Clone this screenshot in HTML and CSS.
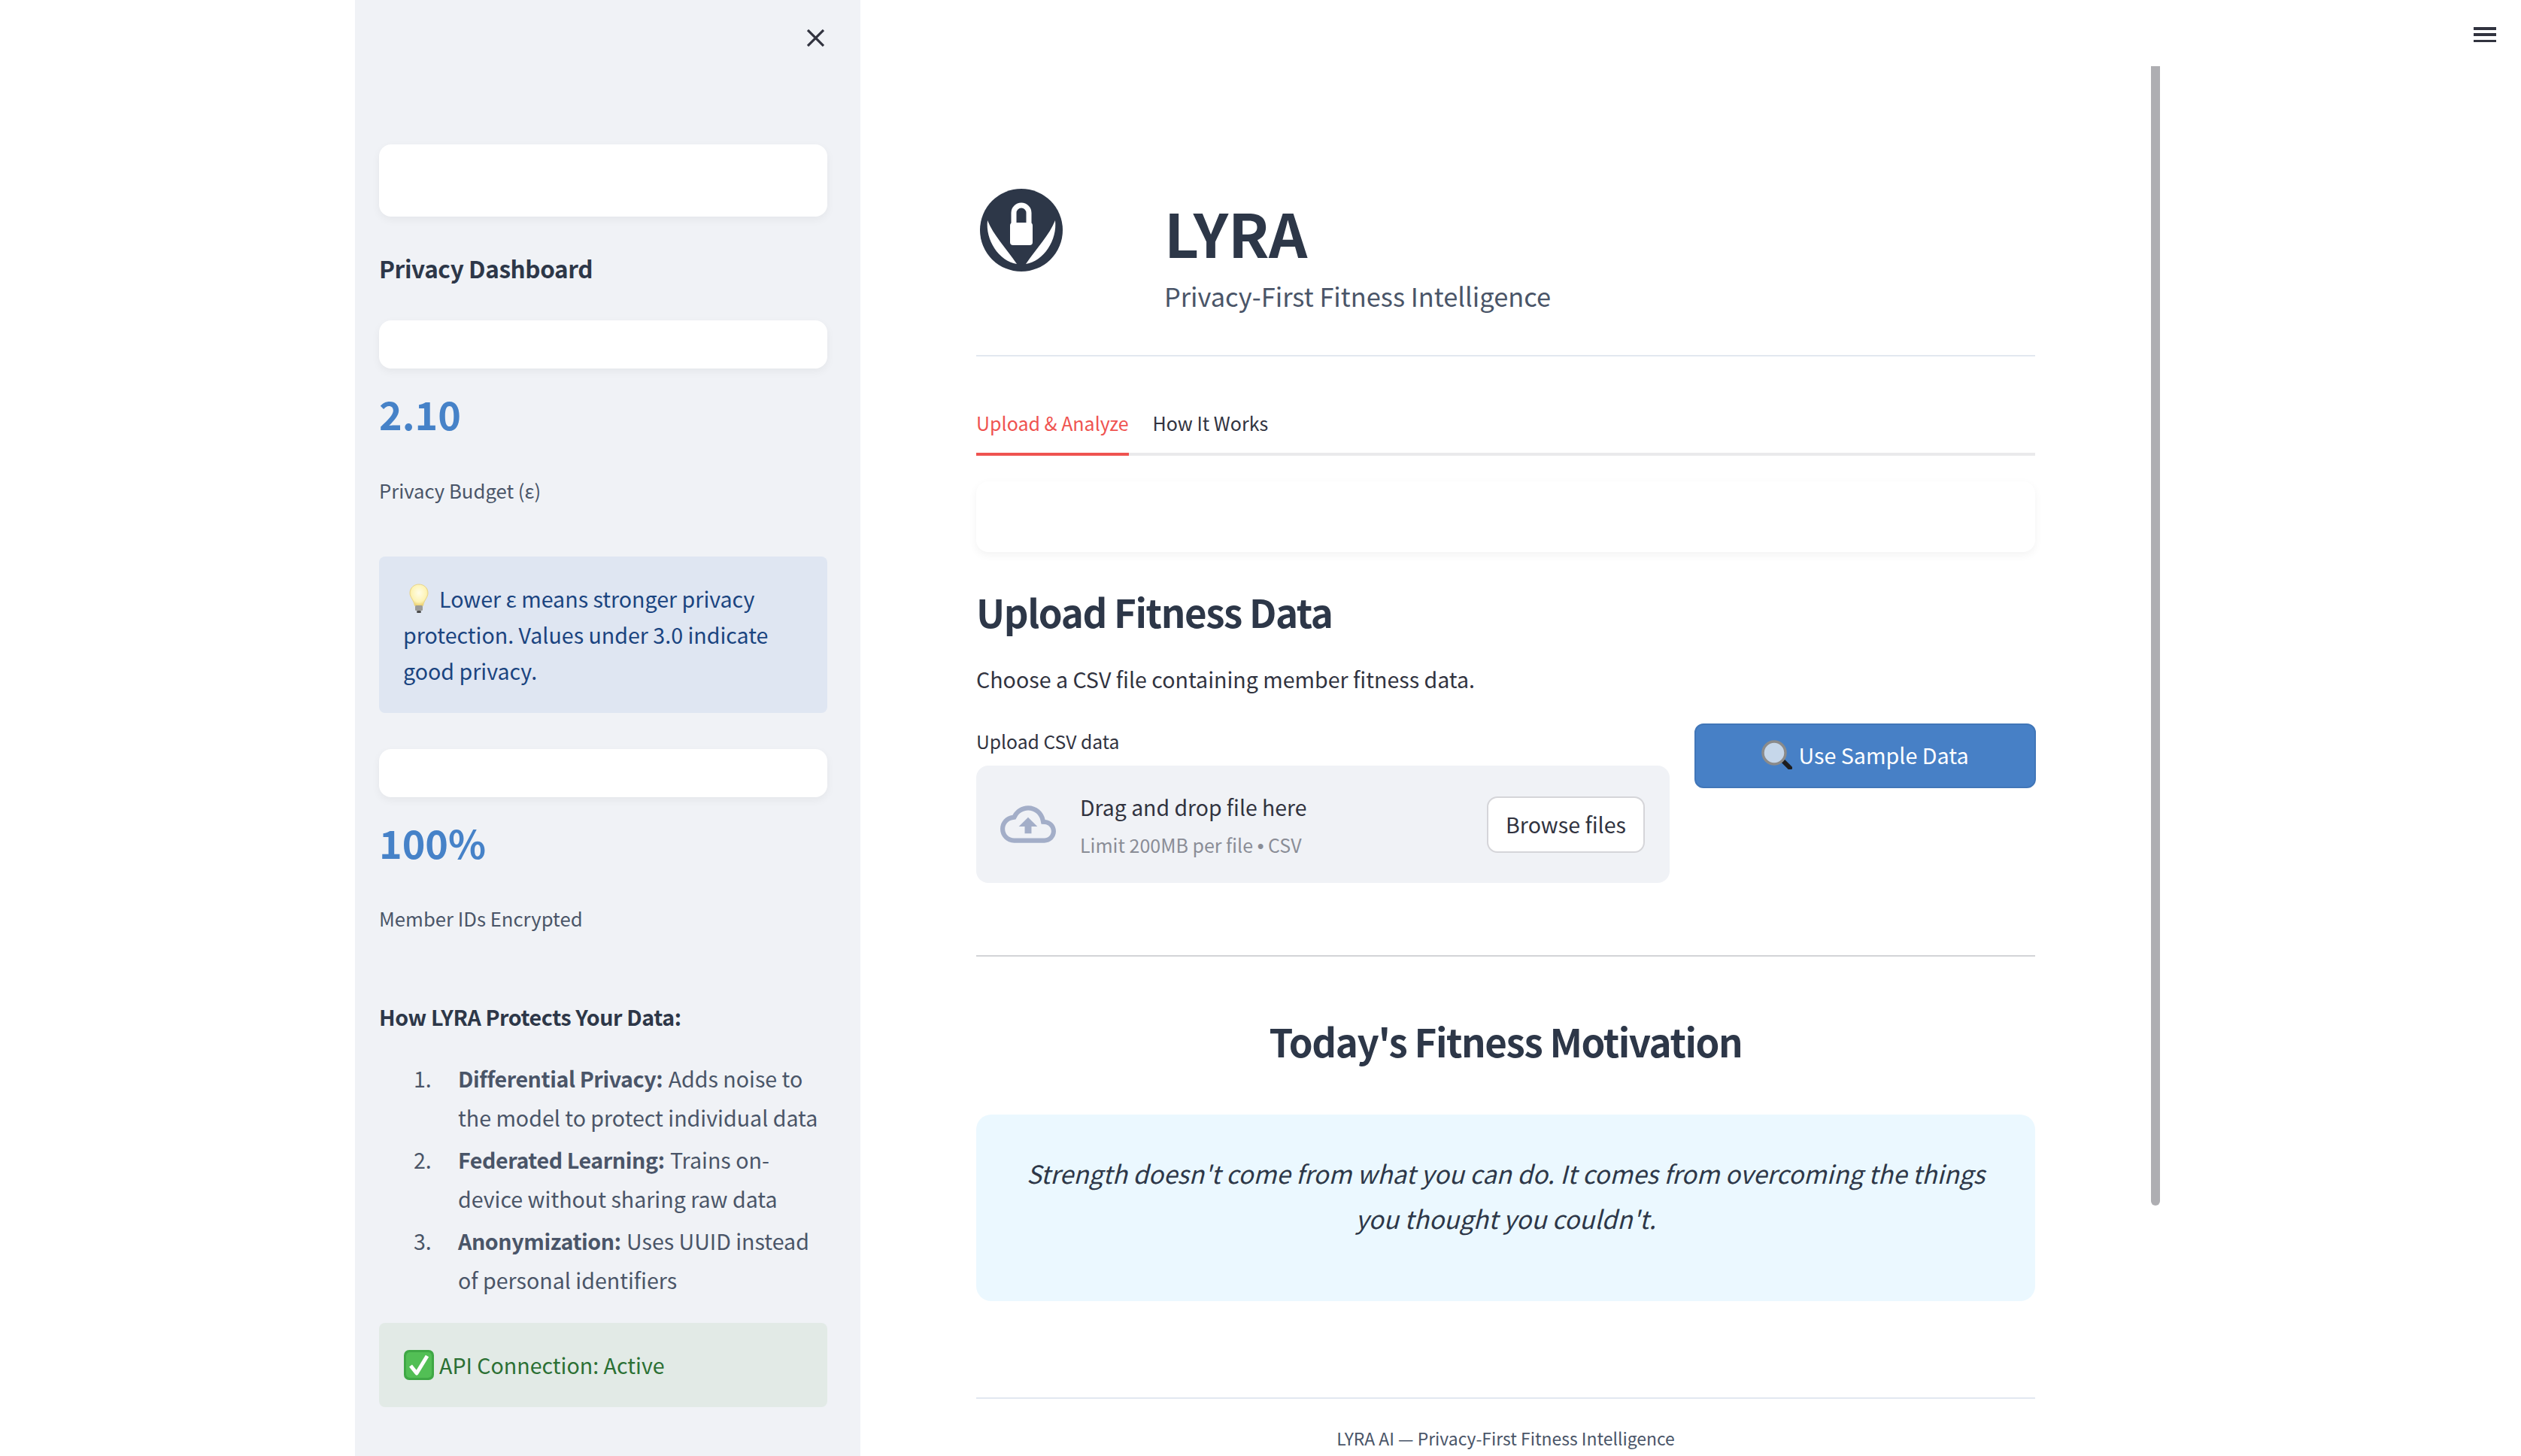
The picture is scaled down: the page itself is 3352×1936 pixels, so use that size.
FILE: index.html
```html
<!DOCTYPE html>
<html lang="en">
<head>
<meta charset="utf-8">
<title>LYRA</title>
<link rel="stylesheet" href="styles.css">
</head>
<body>
<aside class="sidebar">
  <svg class="close" viewBox="0 0 23 23"><path d="M1 1l21 21M22 1L1 22"/></svg>
  <div class="card card-lg"></div>
  <h3 class="side-title">Privacy Dashboard</h3>
  <div class="card card-sm"></div>
  <div class="metric-value">2.10</div>
  <div class="metric-label">Privacy Budget (ε)</div>
  <div class="info"><svg class="emoji-bulb" viewBox="0 0 26 39"><defs><radialGradient id="b" cx=".5" cy=".4" r=".6"><stop offset="0" stop-color="#fffde8"/><stop offset=".7" stop-color="#fdf3b4"/><stop offset="1" stop-color="#eccf6e"/></radialGradient></defs><path d="M13 1C6 1 1 6 1 12.500c0 6 5 9 6.500 17h11C20 21.500 25 18.500 25 12.500 25 6 20 1 13 1z" fill="url(#b)" stroke="#e8d48a"/><rect x="8" y="29" width="10" height="7" rx="1.500" fill="#9b9b98"/><rect x="10" y="36" width="6" height="3" rx="1.500" fill="#4b4b4b"/></svg>Lower ε means stronger privacy protection. Values under 3.0 indicate good privacy.</div>
  <div class="card card-sm card-gap"></div>
  <div class="metric-value">100%</div>
  <div class="metric-label">Member IDs Encrypted</div>
  <h4 class="side-sub">How LYRA Protects Your Data:</h4>
  <ol class="steps">
    <li><span>1.</span><p><b>Differential Privacy:</b> Adds noise to the model to protect individual data</p></li>
    <li><span>2.</span><p><b>Federated Learning:</b> Trains on-device without sharing raw data</p></li>
    <li><span>3.</span><p><b>Anonymization:</b> Uses UUID instead of personal identifiers</p></li>
  </ol>
  <div class="success"><svg class="emoji-check" viewBox="0 0 40 40"><rect width="40" height="40" rx="7" fill="#3fa845"/><rect x="3" y="3" width="34" height="34" rx="5" fill="#52bf55"/><path d="M9 21l8 10L31 8" fill="none" stroke="#fff" stroke-width="5" stroke-linejoin="round"/></svg>API Connection: Active</div>
</aside>

<main class="main">
  <header class="hero">
    <svg class="logo" viewBox="0 0 110 110">
      <circle cx="55" cy="55" r="55" fill="#2d3748"/>
      <path d="M10 42C7 68 25 96 49 100 34 78 18 62 10 42zM100 42C103 68 85 96 61 100 76 78 92 62 100 42z" fill="#fff"/>
      <rect x="40" y="45" width="30" height="30" rx="4" fill="#fff"/>
      <path d="M45 47V32a10 10 0 0 1 20 0V47" fill="none" stroke="#fff" stroke-width="7"/>
    </svg>
    <div class="hero-text">
      <h1>LYRA</h1>
      <p>Privacy-First Fitness Intelligence</p>
    </div>
  </header>
  <hr class="rule">
  <nav class="tabs"><a class="tab active">Upload &amp; Analyze</a><a class="tab">How It Works</a></nav>
  <div class="card blank"></div>
  <h2 class="heading">Upload Fitness Data</h2>
  <p class="lead">Choose a CSV file containing member fitness data.</p>
  <section class="upload-row">
    <div class="upload-col">
      <label class="upload-label">Upload CSV data</label>
      <div class="dropzone">
        <svg class="cloud" viewBox="0 4 24 16"><path d="M19.35 10.04C18.67 6.59 15.64 4 12 4 9.11 4 6.6 5.64 5.35 8.04 2.34 8.36 0 10.91 0 14c0 3.31 2.69 6 6 6h13c2.76 0 5-2.24 5-5 0-2.64-2.05-4.78-4.65-4.96zM19 18H6c-2.21 0-4-1.79-4-4 0-2.05 1.53-3.76 3.56-3.97l1.07-.11.5-.95C8.08 7.14 9.94 6 12 6c2.62 0 4.88 1.86 5.39 4.43l.3 1.5 1.53.11c1.56.1 2.78 1.41 2.78 2.96 0 1.65-1.35 3-3 3zM8 13h2.55v3h2.9v-3H16l-4-4z"/></svg>
        <div class="drop-text"><div class="drop-main">Drag and drop file here</div><div class="drop-sub">Limit 200MB per file <span class="dot">•</span> CSV</div></div>
        <button class="browse">Browse files</button>
      </div>
    </div>
    <button class="sample"><svg class="emoji-glass" viewBox="0 0 41 39"><path d="M28 27l10 10" stroke="#1d1d1f" stroke-width="6" stroke-linecap="round"/><path d="M25 24l4 4" stroke="#8d8d8d" stroke-width="4"/><circle cx="17" cy="17" r="15" fill="#c6d7ea" stroke="#8b8b8b" stroke-width="3.500"/></svg>Use Sample Data</button>
  </section>
  <hr class="rule rule-grey">
  <h2 class="heading center">Today's Fitness Motivation</h2>
  <blockquote class="quote">Strength doesn't come from what you can do. It comes from overcoming the things you thought you couldn't.</blockquote>
  <hr class="rule rule-foot">
  <footer class="foot">LYRA AI — Privacy-First Fitness Intelligence</footer>
</main>

<div class="scrollbar"></div>
<div class="burger"><i></i><i></i><i></i></div>
</body>
</html>
```

FILE: styles.css
```css
* { box-sizing: border-box; }
html, body { height: 100%; margin: 0; }
body {
  display: flex;
  height: 1936px;
  overflow: hidden;
  padding-left: 472px;
  background: #fff;
  font-family: "Noto Sans CJK SC", "Noto Sans", sans-serif;
  color: #4a5568;
  position: relative;
}
h1, h2, h3, h4, p, ol, blockquote { margin: 0; padding: 0; font-weight: inherit; font-size: inherit; }

.sidebar {
  position: relative;
  flex: none;
  width: 672px;
  height: 1936px;
  padding: 192px 44px 0 32px;
  background: #f0f2f6;
}
.close {
  position: absolute;
  top: 39px;
  left: 601px;
  width: 23px;
  height: 23px;
  fill: none;
  stroke: #31333f;
  stroke-width: 3.2;
}
.card { background: #fff; border-radius: 16px; box-shadow: 0 4px 12px rgba(0,0,0,.05); }
.card-lg { height: 96px; }
.card-sm { height: 64px; margin-top: 48px; }
.side-title { margin-top: 46px; font-size: 31.500px; letter-spacing: -.4px; line-height: 44px; font-weight: 700; color: #2d3748; }
.metric-value { margin-top: 25px; font-size: 52px; line-height: 70px; font-weight: 700; color: #4682c8; }
.metric-label { margin-top: 49px; font-size: 25.700px; line-height: 36px; }
.info {
  margin-top: 70px;
  height: 208px;
  padding: 32px 32px 0;
  border-radius: 8px;
  background: #dfe6f2;
  color: #1a4480;
  font-size: 28.600px;
  line-height: 48px;
}
.emoji-bulb { width: 26px; height: 39px; margin: 0 14px 0 8px; vertical-align: -7px; }
.card-gap + .metric-value { margin-top: 25px; }
.card-gap + .metric-value + .metric-label { margin-top: 48px; }
.side-sub { margin-top: 93px; font-size: 28.600px; letter-spacing: -.4px; line-height: 40px; font-weight: 700; color: #2d3748; }
.steps { list-style: none; margin-top: 36px; margin-left: 46px; font-size: 28.600px; line-height: 52px; }
.steps li { display: grid; grid-template-columns: 59px 1fr; margin-top: 4px; }
.steps li:first-child { margin-top: 0; }
.steps b { font-weight: 700; letter-spacing: -.4px; margin-right: 1px; }
.success {
  margin-top: 31px;
  height: 112px;
  padding: 32px 32px 0;
  border-radius: 8px;
  background: #e2eae6;
  color: #2b7034;
  font-size: 28.600px;
  line-height: 48px;
}
.emoji-check { width: 40px; height: 40px; margin: 0 7px 0 1px; vertical-align: -8px; }

.main { flex: none; width: 1562px; padding: 251px 0 0 154px; }
.hero { display: flex; height: 165px; }
.logo { flex: none; width: 110px; height: 110px; margin-left: 5px; }
.hero-text { margin: 7px 0 0 135px; }
.hero-text h1 { font-size: 80px; line-height: 100px; font-weight: 700; color: #2d3748; }
.hero-text p { margin-top: 10px; font-size: 34.400px; line-height: 50px; }
.rule { border: 0; height: 2px; margin: 56px 0 0; background: #e2e8f0; }
.tabs { display: flex; gap: 32px; margin-top: 70px; border-bottom: 4px solid #eaeaec; }
.tab { padding-bottom: 22px; margin-bottom: -4px; border-bottom: 4px solid transparent; font-size: 25px; line-height: 36px; color: #31333f; }
.tab.active { color: #ef5350; border-bottom-color: #ef5350; }
.blank { height: 94px; margin-top: 34px; }
.heading { margin-top: 44px; font-size: 51px; letter-spacing: -1.4px; line-height: 70px; font-weight: 700; color: #2d3748; }
.lead { margin-top: 33px; font-size: 28.600px; line-height: 44px; color: #31333f; }
.upload-row { display: flex; gap: 33px; align-items: flex-start; }
.upload-col { flex: none; width: 922px; padding-top: 42px; }
.upload-label { display: block; font-size: 24.700px; line-height: 36px; color: #31333f; }
.dropzone { display: flex; align-items: center; height: 156px; margin-top: 15px; padding: 0 33px 0 32px; border-radius: 16px; background: #f0f2f6; }
.cloud { flex: none; width: 74px; height: 50px; fill: #a3aec8; }
.drop-text { margin: 2px 0 0 32px; }
.drop-main { font-size: 28.400px; line-height: 40px; color: #31333f; }
.drop-sub { margin-top: 13px; font-size: 25px; line-height: 34px; color: #8a8d96; }
.dot { font-family: "Liberation Sans", sans-serif; }
.browse { margin-left: auto; width: 210px; height: 75px; padding: 0 0 2px; border: 2px solid #d5d5d9; border-radius: 14px; background: #fff; font: inherit; font-size: 28.600px; color: #31333f; }
.sample { flex: none; width: 454px; height: 86px; margin-top: 37px; padding: 0 0 3px; border: 2px solid #4176b8; border-radius: 12px; background: #4780c6; color: #fff; font: inherit; font-size: 28.700px; }
.emoji-glass { width: 41px; height: 39px; margin-right: 8px; vertical-align: -7px; }
.rule-grey { height: 2px; margin-top: 96px; background: #d3d4d7; }
.center { text-align: center; margin-top: 77px; }
.quote { height: 248px; margin-top: 63px; padding: 48px 50px 0; border-radius: 20px; background: #ebf8ff; text-align: center; font-style: italic; font-size: 33.200px; line-height: 60px; color: #2d3748; }
.rule-foot { margin-top: 128px; }
.foot { margin-top: 35px; font-size: 22.900px; line-height: 34px; text-align: center; }

.scrollbar { position: absolute; left: 2860px; top: 88px; width: 12px; height: 1515px; background: #aeaeb2; border-radius: 0 0 6px 6px; }
.burger { position: absolute; left: 3289px; top: 36px; width: 30px; height: 20px; display: flex; flex-direction: column; justify-content: space-between; }
.burger i { display: block; height: 3.500px; background: #31333f; }
```
